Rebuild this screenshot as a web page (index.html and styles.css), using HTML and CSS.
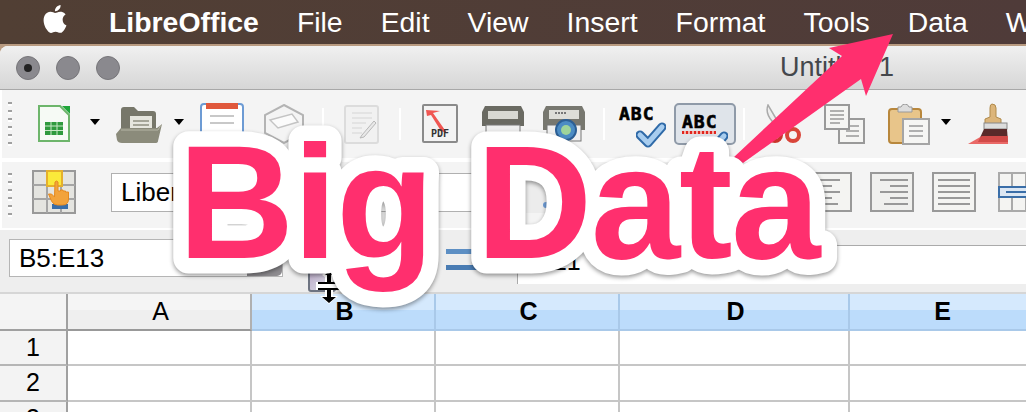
FILE: index.html
```html
<!DOCTYPE html>
<html lang="en">
<head>
    <meta charset="UTF-8">
    <title>Big Data - LibreOffice</title>
    <link rel="stylesheet" href="styles.css">
</head>
<body>

    <!-- Menu bar -->
    <div class="menubar">
        <svg class="apple" width="28" height="32" viewBox="0 0 24 24.2"><path fill="#fff" d="M12.152 6.896c-.948 0-2.415-1.078-3.96-1.04-2.04.027-3.91 1.183-4.961 3.014-2.117 3.675-.546 9.103 1.519 12.09 1.013 1.454 2.208 3.09 3.792 3.039 1.52-.065 2.09-.987 3.935-.987 1.831 0 2.35.987 3.96.948 1.637-.026 2.676-1.48 3.676-2.948 1.156-1.688 1.636-3.325 1.662-3.415-.039-.013-3.182-1.221-3.22-4.857-.026-3.04 2.48-4.494 2.597-4.559-1.429-2.09-3.623-2.324-4.39-2.376-2-.156-3.675 1.09-4.61 1.09zM15.53 3.83c.843-1.012 1.4-2.427 1.245-3.83-1.207.052-2.662.805-3.532 1.818-.78.896-1.454 2.338-1.273 3.714 1.338.104 2.715-.688 3.559-1.701"/></svg>
        <span class="app-name">LibreOffice</span>
        <span>File</span>
        <span>Edit</span>
        <span>View</span>
        <span>Insert</span>
        <span>Format</span>
        <span>Tools</span>
        <span>Data</span>
        <span>Window</span>
    </div>

    <div class="window">
        <!-- Title bar -->
        <div class="titlebar">
            <span class="light"><i></i></span>
            <span class="light"></span>
            <span class="light"></span>
            <span class="doc-title">Untitled 1</span>
        </div>

        <!-- Standard toolbar -->
        <div class="toolbar toolbar-top">
            <span class="grip"></span>
            <svg class="t-new" width="32" height="38" viewBox="0 0 32 38">
                <path d="M1 1h21l9 9v26H1z" fill="#f6faf5" stroke="#6db56b" stroke-width="2"/>
                <path d="M24 1h8v8z" fill="#1fa53a"/>
                <rect x="7" y="17" width="18" height="13" fill="#2f9a3e"/>
                <path d="M7 21h18M7 25.500h18M13 17v13M19 17v13" stroke="#c9e8c7" stroke-width="1"/>
            </svg>
            <span class="drop d-1"></span>
            <svg class="t-open" width="46" height="37" viewBox="0 0 46 37">
                <path d="M5 4q0-3 3-3h10l4 4h15q3 0 3 3v18H5z" fill="#77776a"/>
                <rect x="14" y="10" width="22" height="20" fill="#e6e6de"/>
                <path d="M17 15h16M17 19h16M17 23h16" stroke="#a5a598" stroke-width="2"/>
                <path d="M0 28l5-6h36l5-4-4 17q0 2-3 2H6q-4 0-5-3z" fill="#8b8b7b"/>
                <path d="M5 24h37l3-5" fill="none" stroke="#b5b5a6" stroke-width="1"/>
            </svg>
            <span class="drop d-2"></span>
            <svg class="t-templates" width="44" height="36" viewBox="0 0 44 36">
                <rect x="1" y="1" width="42" height="34" rx="3" fill="#fff" stroke="#6d9bd4" stroke-width="2"/>
                <rect x="6" y="0" width="32" height="6" fill="#e0583c"/>
                <path d="M10 13h24M10 20h24" stroke="#c8c8c8" stroke-width="2"/>
            </svg>
            <svg class="t-save" width="40" height="40" viewBox="0 0 40 40">
                <path d="M20 1l19 10v18L20 39 1 29V11z" fill="#f4f4f4" stroke="#b4b4b4" stroke-width="2"/>
                <path d="M6 16l22-6 6 8-20 6z" fill="#fbfbfb" stroke="#c4c4c4" stroke-width="1.500"/>
            </svg>
            <span class="sep s-1"></span>
            <svg class="t-edit" width="35" height="39" viewBox="0 0 35 39">
                <rect x="1" y="1" width="33" height="37" rx="2" fill="#f1f1f1" stroke="#dcdcdc" stroke-width="2"/>
                <path d="M8 8h20M8 13h20M8 18h14M8 23h10M8 28h10" stroke="#dedede" stroke-width="1.500"/>
                <path d="M30 16L18 30l-2 3 4-1 12-14z" fill="#e8e8e8" stroke="#b8b8b8"/>
            </svg>
            <span class="sep s-2"></span>
            <svg class="t-pdf" width="36" height="40" viewBox="0 0 36 40">
                <rect x="1" y="1" width="34" height="37" rx="1" fill="#f3f3f3" stroke="#8a8a8a" stroke-width="2"/>
                <path d="M4 6l14 1-7 2 14 20-6-2L9 11 5 12z" fill="#ee3a35" opacity="0.85"/>
                <text class="pdf-label" x="18" y="33">PDF</text>
            </svg>
            <svg class="t-print" width="46" height="38" viewBox="0 0 46 38">
                <path d="M5 1h36l3 6v14H2V7z" fill="#6a6a62"/>
                <rect x="8" y="6" width="30" height="8" fill="#d8d8d2"/>
                <rect x="6" y="20" width="34" height="14" fill="#efefef" stroke="#777"/>
            </svg>
            <svg class="t-preview" width="46" height="38" viewBox="0 0 46 38">
                <path d="M5 1h36l3 6v18H2V7z" fill="#77776f"/>
                <rect x="8" y="5" width="30" height="9" fill="#deded8"/>
                <path d="M14 8h12" stroke="#777" stroke-width="2" stroke-dasharray="2 1"/>
                <rect x="6" y="20" width="34" height="16" fill="#efefef" stroke="#777"/>
                <circle cx="25" cy="25" r="10" fill="#4c8cc4" stroke="#2c5f95" stroke-width="2"/>
                <circle cx="25" cy="25" r="5" fill="#9fd49a"/>
            </svg>
            <span class="sep s-3"></span>
            <div class="t-abc spell">
                <span class="abc">ABC</span>
                <svg class="check" width="30" height="26" viewBox="0 0 30 26">
                    <path d="M4 13l8 8L26 5" fill="none" stroke="#2f6aa8" stroke-width="9" stroke-linejoin="round" stroke-linecap="round"/>
                    <path d="M4 13l8 8L26 5" fill="none" stroke="#a8cdef" stroke-width="5" stroke-linejoin="round" stroke-linecap="round"/>
                </svg>
            </div>
            <div class="t-auto spell">
                <span class="abc">ABC</span>
                <span class="wavy"></span>
                <svg class="check" width="30" height="26" viewBox="0 0 30 26">
                    <path d="M4 13l8 8L26 5" fill="none" stroke="#2f6aa8" stroke-width="9" stroke-linejoin="round" stroke-linecap="round"/>
                    <path d="M4 13l8 8L26 5" fill="none" stroke="#a8cdef" stroke-width="5" stroke-linejoin="round" stroke-linecap="round"/>
                </svg>
            </div>
            <span class="sep s-4"></span>
            <svg class="t-cut" width="36" height="40" viewBox="0 0 36 40">
                <path d="M3 1q-3 8 4 16l6 9 3-3z" fill="#eee" stroke="#aaa" stroke-width="1.500"/>
                <circle cx="10" cy="31" r="6" fill="none" stroke="#c9352c" stroke-width="4"/>
                <circle cx="28" cy="31" r="6" fill="none" stroke="#d9453a" stroke-width="4"/>
            </svg>
            <svg class="t-copy" width="42" height="40" viewBox="0 0 42 40">
                <rect x="15" y="15" width="25" height="24" fill="#f5f5f3" stroke="#999" stroke-width="2"/>
                <path d="M22 22h13M22 27h13M22 32h13" stroke="#999" stroke-width="1.500"/>
                <rect x="1" y="1" width="24" height="24" fill="#f5f5f3" stroke="#999" stroke-width="2"/>
                <path d="M6 7h14M6 11h14M6 15h14M6 19h10" stroke="#999" stroke-width="1.500"/>
            </svg>
            <svg class="t-paste" width="42" height="41" viewBox="0 0 42 41">
                <rect x="1" y="5" width="32" height="34" rx="3" fill="#e8c58a" stroke="#b8873c" stroke-width="2"/>
                <path d="M10 8V3h3q1-3 4-3t4 3h3v5z" fill="#ddd" stroke="#999"/>
                <rect x="15" y="15" width="26" height="25" fill="#f6f6f4" stroke="#a5a5a5" stroke-width="2"/>
                <path d="M21 22h14M21 27h14M21 32h14" stroke="#999" stroke-width="1.500"/>
            </svg>
            <span class="drop d-3"></span>
            <svg class="t-brush" width="47" height="42" viewBox="0 0 47 42">
                <path d="M24 1q4 0 4 4v9l5 2v7H17v-7l5-2V5q0-4 2-4z" fill="#dcb57a" stroke="#b08a4a"/>
                <rect x="16" y="20" width="23" height="6" fill="#ddd" stroke="#888"/>
                <path d="M16 26h23l1 13H10z" fill="#5a2a2a"/>
                <path d="M0 41l14-8 26 0v8z" fill="#e8504d" opacity="0.85"/>
            </svg>
        </div>

        <!-- Formatting toolbar -->
        <div class="toolbar toolbar-format">
            <span class="grip"></span>
            <svg class="t-styles" width="44" height="44" viewBox="0 0 44 44">
                <rect x="1" y="1" width="42" height="42" fill="#e4e4e0" stroke="#999" stroke-width="2"/>
                <path d="M15 1v42M29 1v42M1 15h42M1 29h42" stroke="#a5a5a5" stroke-width="2"/>
                <rect x="15" y="1" width="15" height="15" fill="#fbe93a" stroke="#e5b02c" stroke-width="2"/>
                <rect x="20" y="34" width="16" height="5" fill="#3a6ea8"/>
                <path d="M23 12q1.500-2 3 0v9h2.500v-1h2.500v1h2.500v1h3v7q0 6-6 6h-5q-4 0-6-4l-3-7 3 0 3 3z" fill="#f2a33c" stroke="#e58a20"/>
            </svg>
            <div class="font-box">Liberation Sans</div>
            <svg class="t-bold" width="26" height="41" viewBox="0 0 26 41">
                <rect x="0" y="0" width="26" height="41" fill="#ececec"/>
                <circle cx="20" cy="33" r="3" fill="#6d9bd4"/>
            </svg>
            <svg class="t-left" width="44" height="42" viewBox="0 0 44 42">
                <rect x="1" y="1" width="42" height="38" fill="#f4f4f2" stroke="#999" stroke-width="2"/>
                <path d="M6 8h26M6 14h18M6 20h26M6 26h18M6 32h24" stroke="#999" stroke-width="2"/>
            </svg>
            <svg class="t-right" width="44" height="42" viewBox="0 0 44 42">
                <rect x="1" y="1" width="42" height="38" fill="#f0f0ee" stroke="#999" stroke-width="2"/>
                <path d="M10 8h28M20 14h18M10 20h28M20 26h18M14 32h24" stroke="#999" stroke-width="2"/>
            </svg>
            <svg class="t-justify" width="44" height="42" viewBox="0 0 44 42">
                <rect x="1" y="1" width="42" height="38" fill="#f4f4f2" stroke="#999" stroke-width="2"/>
                <path d="M6 8h32M6 14h32M6 20h32M6 26h32M6 32h32" stroke="#999" stroke-width="2"/>
            </svg>
            <svg class="t-table" width="44" height="42" viewBox="0 0 44 42">
                <rect x="1" y="1" width="42" height="38" fill="#f4f4f2" stroke="#aaa" stroke-width="2"/>
                <path d="M14 1v38M28 1v38" stroke="#aaa" stroke-width="2"/>
                <rect x="1" y="15" width="42" height="10" fill="#dce7f3" stroke="#3a6ea8" stroke-width="2"/>
                <path d="M8 20h30" stroke="#3a6ea8" stroke-width="2"/>
            </svg>
        </div>

        <!-- Formula bar -->
        <div class="formula-bar">
            <div class="name-box">
                <span class="name-text">B5:E13</span>
                <span class="name-drop"></span>
            </div>
            <span class="wizard"></span>
            <span class="equals"></span>
            <div class="formula-input">E1</div>
        </div>

        <!-- Sheet -->
        <div class="sheet">
            <div class="corner"></div>
            <div class="col-head col-plain">A</div>
            <div class="col-head">B</div>
            <div class="col-head">C</div>
            <div class="col-head">D</div>
            <div class="col-head">E</div>

            <div class="row-head">1</div>
            <div class="cell"></div><div class="cell"></div><div class="cell"></div><div class="cell"></div><div class="cell"></div>
            <div class="row-head">2</div>
            <div class="cell"></div><div class="cell"></div><div class="cell"></div><div class="cell"></div><div class="cell"></div>
            <div class="row-head">3</div>
            <div class="cell"></div><div class="cell"></div><div class="cell"></div><div class="cell"></div><div class="cell"></div>
        </div>
    </div>

    <!-- Mouse cursor -->
    <svg class="cursor" width="30" height="36" viewBox="0 0 30 36">
        <path d="M15 0l7 7-3 2v5h9v8h-9v6h5l-9 8-9-8h5v-6H2v-8h9V9L8 7z" fill="#fff"/>
        <path d="M15 3l4 4h-2v7h9v2H4v-2h9V7h-2zM4 20h22v2h-9v7h5l-7 6-7-6h5v-7H4z" fill="#000"/>
    </svg>

    <!-- Big Data label and arrow -->
    <svg class="overlay" width="1026" height="412" viewBox="0 0 1026 412">
        <path class="arrow" d="M893 34L829 48l13 8L734 157l9 6L861 79l5 17z"/>
        <g class="label-shadow">
            <text class="label label-back" x="178" y="258">Big Data</text>
        </g>
        <text class="label" x="178" y="258">Big Data</text>
    </svg>

</body>
</html>
```

FILE: styles.css
```css
* {
    box-sizing: border-box;
    margin: 0;
    padding: 0;
}

body {
    position: relative;
    width: 1026px;
    height: 412px;
    overflow: hidden;
    background-color: #b89a80;
    font-family: 'Liberation Sans', Arial, sans-serif;
    color: #000;
}

/* Menu bar */
.menubar {
    display: flex;
    align-items: center;
    gap: 38px;
    height: 44px;
    padding-left: 41px;
    background: linear-gradient(to right, #513f34, #4f3b39);
    color: #fff;
    font-size: 28.4px;
    white-space: nowrap;
}

.menubar > * {
    flex-shrink: 0;
}

.apple {
    margin-top: -6px;
}

.app-name {
    margin-left: 2px;
    font-weight: bold;
}

.window {
    width: 1026px;
    margin-top: 2px;
    background-color: #fff;
    border-top-left-radius: 8px;
    overflow: hidden;
}

/* Title bar */
.titlebar {
    display: flex;
    align-items: center;
    height: 44px;
    padding-left: 16px;
    gap: 16px;
    background: linear-gradient(#f0f0f0, #d6d6d6);
    border-bottom: 1px solid #a8a8a8;
}

.light {
    display: flex;
    align-items: center;
    justify-content: center;
    width: 24px;
    height: 24px;
    border-radius: 50%;
    background-color: #8a898e;
    border: 1px solid #77767a;
}

.light i {
    width: 8px;
    height: 8px;
    border-radius: 50%;
    background-color: #222;
}

.doc-title {
    margin-left: 644px;
    font-size: 27px;
    color: #44474c;
}

/* Toolbars */
.toolbar {
    display: flex;
    align-items: center;
    background-color: #f4f4f4;
    border-left: 2px solid #fff;
    padding-left: 6px;
}

.toolbar-top {
    height: 72px;
    border-bottom: 4px solid #fff;
}

.toolbar-format {
    height: 68px;
    border-bottom: 2px solid #fff;
}

.toolbar svg {
    flex-shrink: 0;
}

.grip {
    width: 4px;
    height: 44px;
    flex-shrink: 0;
    background: repeating-linear-gradient(#a0a0a0 0 2px, #fff 2px 4px, #f4f4f4 4px 8px);
}

.drop {
    flex-shrink: 0;
    width: 0;
    height: 0;
    border-left: 5px solid transparent;
    border-right: 5px solid transparent;
    border-top: 6px solid #000;
    margin-top: -4px;
}

.sep {
    flex-shrink: 0;
    width: 2px;
    height: 32px;
    background-color: #fff;
}

.t-new { margin-left: 26px; }
.d-1 { margin-left: 20px; }
.t-open { margin-left: 16px; }
.d-2 { margin-left: 12px; }
.t-templates { margin-left: 16px; margin-top: -6px; }
.t-save { margin-left: 20px; }
.s-1 { margin-left: 18px; }
.t-edit { margin-left: 20px; }
.s-2 { margin-left: 20px; }
.t-pdf { margin-left: 21px; }
.t-print { margin-left: 22px; }
.t-preview { margin-left: 15px; }
.s-3 { margin-left: 16px; }
.t-abc { margin-left: 13px; width: 50px; }
.t-auto { margin-left: 6px; width: 62px; height: 62px; }
.s-4 { margin-left: 7px; }
.t-cut { margin-left: 20px; }
.t-copy { margin-left: 23px; }
.t-paste { margin-left: 22px; }
.d-3 { margin-left: 11px; }
.t-brush { margin-left: 17px; }

.pdf-label {
    font-family: 'DejaVu Sans Mono', monospace;
    font-size: 10px;
    font-weight: bold;
    text-anchor: middle;
    fill: #333;
}

.spell {
    position: relative;
    flex-shrink: 0;
    height: 42px;
}

.t-auto {
    background-color: #dfe4ea;
    border: 2px solid #8f9aa8;
    border-radius: 5px;
}

.abc {
    position: absolute;
    left: 1px;
    top: 1px;
    font-family: 'DejaVu Sans Mono', monospace;
    font-size: 18px;
    font-weight: bold;
    letter-spacing: 1px;
    line-height: 20px;
    color: #000;
    -webkit-text-stroke: 0.6px #000;
}

.t-auto .abc {
    left: 6px;
    top: 7px;
}

.wavy {
    position: absolute;
    left: 6px;
    top: 26px;
    width: 34px;
    height: 3px;
    background: repeating-linear-gradient(to right, #e0261f 0 2px, #f4b0a8 2px 4px);
}

.check {
    position: absolute;
    left: 18px;
    top: 19px;
}

.t-auto .check {
    left: 22px;
    top: 26px;
}

.t-styles { margin-left: 20px; margin-top: -6px; }
.t-bold { margin-left: 35px; margin-top: -6px; }
.t-left { margin-left: 256px; margin-top: -4px; }
.t-right { margin-left: 18px; margin-top: -4px; }
.t-justify { margin-left: 18px; margin-top: -4px; }
.t-table { margin-left: 22px; margin-top: -4px; }

.font-box {
    flex-shrink: 0;
    width: 380px;
    height: 39px;
    margin-left: 35px;
    margin-top: -6px;
    padding-left: 9px;
    background-color: #fff;
    border: 1px solid #b0b0b0;
    font-size: 26px;
    line-height: 37px;
}

/* Formula bar */
.formula-bar {
    display: flex;
    height: 64px;
    background-color: #eee;
    border-bottom: 2px solid #d6d6d6;
}

.name-box {
    display: flex;
    width: 274px;
    height: 38px;
    margin: 9px 0 0 9px;
    background-color: #fff;
    border: 1px solid #b5b5b5;
    flex-shrink: 0;
}

.name-text {
    flex: 1;
    padding-left: 9px;
    font-size: 26px;
    line-height: 36px;
}

.name-drop {
    width: 35px;
    background-color: #8e8c90;
    border-radius: 0 0 5px 0;
}

.wizard {
    flex-shrink: 0;
    width: 28px;
    height: 26px;
    margin: 36px 0 0 25px;
    background: linear-gradient(135deg, #b9a7c6, #dfe3ea);
    border: 2px solid #6e7482;
    border-radius: 3px;
}

.equals {
    flex-shrink: 0;
    width: 32px;
    height: 21px;
    margin: 19px 0 0 110px;
    border-top: 5px solid #5d8fc4;
    border-bottom: 5px solid #4a7cb3;
}

.formula-input {
    flex: 1;
    height: 39px;
    margin: 15px 0 0 39px;
    padding-left: 32px;
    background-color: #fff;
    border-top: 1px solid #aaa;
    border-left: 1px solid #aaa;
    font-size: 25px;
    line-height: 30px;
}

/* Sheet */
.sheet {
    display: grid;
    grid-template-columns: 68px 184px 184px 184px 230px 184px;
    grid-template-rows: 37px 35px 36px 36px;
    width: 1034px;
}

.corner {
    background-color: #f4f4f4;
    border-right: 2px solid #a0a0a0;
    border-bottom: 2px solid #a0a0a0;
}

.col-head {
    padding-left: 3px;
    text-align: center;
    font-size: 25px;
    font-weight: bold;
    line-height: 34px;
    background: linear-gradient(#d5e9fd 0 16px, #bcdcfb 16px);
    border-right: 2px solid #a9c9e9;
    border-bottom: 2px solid #a9c9e9;
}

.col-plain {
    font-weight: normal;
    background: linear-gradient(#f5f5f5 0 16px, #efefef 16px);
    border-bottom-color: #999;
    border-right-color: #b0b0b0;
}

.row-head {
    text-align: center;
    font-size: 25px;
    line-height: 33px;
    background-color: #f3f3f3;
    border-right: 2px solid #a0a0a0;
    border-bottom: 2px solid #b5b5b5;
}

.cell {
    background-color: #fff;
    border-right: 2px solid #c6c6c6;
    border-bottom: 2px solid #c6c6c6;
}

/* Things lying over the window */
.cursor {
    position: absolute;
    left: 314px;
    top: 268px;
}

.overlay {
    position: absolute;
    left: 0;
    top: 0;
}

.arrow {
    fill: #ff2f6e;
}

.label {
    font-family: 'Liberation Sans', Arial, sans-serif;
    font-size: 161px;
    font-weight: bold;
    letter-spacing: -1.5px;
    fill: #ff2f6e;
}

.label-back {
    fill: #fff;
    stroke: #fff;
    stroke-width: 31px;
    stroke-linejoin: round;
}

.label-shadow {
    filter: drop-shadow(0 2px 2px rgba(0, 0, 0, 0.4));
}
```
